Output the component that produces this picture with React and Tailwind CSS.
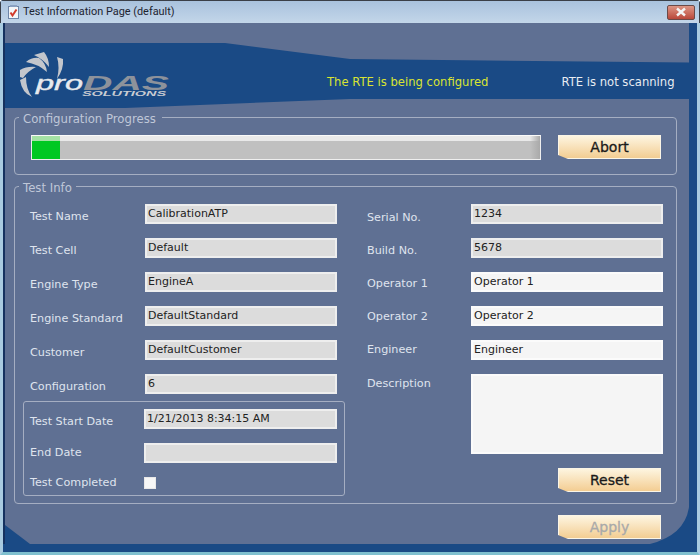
import React from 'react';

const font = { fontFamily: '"DejaVu Sans", sans-serif' };

const Field = ({ value, white, className }) => (
    <div className={`h-[20px] shrink-0 border-2 text-[11px] leading-[14px] text-[#222] ${white ? 'border-[#fbfbfb] bg-[#f5f5f5]' : 'border-[#eeeeee] bg-[#dcdcdc]'} ${className || 'w-[192px] pt-[1px] pl-[1px]'}`}>
        {value}
    </div>
);

const Label = ({ children, className }) => (
    <span className={`shrink-0 text-[11.2px] leading-[14px] text-[#dfe4ee] ${className}`}>{children}</span>
);

const Action = ({ label, disabled }) => (
    <button className={`flex h-[24px] w-[103px] items-center justify-center border border-[#fbf5e6] bg-gradient-to-b from-[#fdf5e0] to-[#f3cd92] text-[14px] [-webkit-text-stroke:0.3px] [clip-path:polygon(0_0,100%_0,100%_100%,10px_100%,0_20px)] ${disabled ? 'text-[#a9a9a9]' : 'text-[#1a1a1a]'}`}>
        {label}
    </button>
);

const GroupBox = ({ title, titleWidth, className, children }) => (
    <div className={`relative rounded-[4px] border border-[#a5aec2] ${className}`}>
        <span className={`absolute top-[-6px] left-[4px] bg-[#5f7093] pl-[4px] text-[11.7px] leading-[14px] whitespace-nowrap text-[#bfc7d8] ${titleWidth}`}>{title}</span>
        {children}
    </div>
);

const Logo = () => (
    <svg width="160" height="48" viewBox="0 0 160 48" className="shrink-0">
        <g fill="#c3c6cc">
            <path d="M15 4 L25 1 Q30 7 30 16 Q24 8 15 4Z" />
            <path d="M38 6 L44 8 Q45 18 38 28 Q41 16 38 6Z" />
            <path d="M7 11 Q13 6 20 7 Q27 12 28 21 Q19 13 7 11Z" />
            <path d="M1 19 Q8 15 17 16 Q9 20 4 27 L1 26Z" />
            <path d="M1 29 L7 26 Q7 38 13 46 Q3 42 1 29Z" />
        </g>
        <text x="17" y="39" textLength="47" lengthAdjust="spacingAndGlyphs" fontFamily="Liberation Sans" fontStyle="italic" fontSize="21" fill="#e8eaee" stroke="#e8eaee" strokeWidth="0.4">pro</text>
        <text x="64" y="39" textLength="86" lengthAdjust="spacingAndGlyphs" fontFamily="Liberation Sans" fontWeight="700" fontStyle="italic" fontSize="21" fill="#8d929b">DAS</text>
        <text x="63" y="44.5" textLength="84" lengthAdjust="spacingAndGlyphs" fontFamily="Liberation Sans" fontWeight="700" fontStyle="italic" fontSize="6.5" fill="#c9ccd2">SOLUTIONS</text>
    </svg>
);

const App = () => {
    const left = [
        ['Test Name', 'CalibrationATP'],
        ['Test Cell', 'Default'],
        ['Engine Type', 'EngineA'],
        ['Engine Standard', 'DefaultStandard'],
        ['Customer', 'DefaultCustomer'],
        ['Configuration', '6'],
    ];
    const right = [
        ['Serial No.', '1234', false],
        ['Build No.', '5678', false],
        ['Operator 1', 'Operator 1', true],
        ['Operator 2', 'Operator 2', true],
        ['Engineer', 'Engineer', true],
    ];

    return (
        <div style={font} className="flex h-[555px] w-[700px] flex-col overflow-hidden rounded-t-[4px] bg-[#1a4a85]">
            {/* title bar */}
            <div className="flex h-[23px] shrink-0 items-center border-x border-t border-[#3a3f47] bg-gradient-to-b from-[#a9c2dd] to-[#c3d6e9] pr-[4px] pl-[6px]">
                <svg width="13" height="16" viewBox="0 0 13 16" className="shrink-0">
                    <rect x="1.5" y="2.5" width="10" height="12" fill="#f4f6f8" stroke="#6f86a8" />
                    <rect x="3" y="1" width="7" height="2" fill="#8aa0c0" />
                    <path d="M3.5 8.5l2 3 4-6" stroke="#d23a2a" strokeWidth="2" fill="none" />
                </svg>
                <span className="ml-[3px] text-[10.9px] text-[#1c2430]" style={{ fontFamily: 'Roboto, sans-serif' }}>Test Information Page (default)</span>
                <div className="ml-auto flex h-[15px] w-[28px] items-center justify-center rounded-[2px] border border-[#6b4a48] bg-gradient-to-b from-[#dd9585] to-[#b9473a]">
                    <svg width="12" height="10" viewBox="0 0 12 10">
                        <path d="M2 1.5l8 7M10 1.5l-8 7" stroke="#f4f4f4" strokeWidth="2.4" />
                    </svg>
                </div>
            </div>

            {/* client area */}
            <div className="flex min-h-0 flex-1 border-x-[3px] border-b-[3px] border-x-[#a9cbe0] border-b-[#7fc0cf]">
                <div className="mr-[8px] mb-[8px] flex min-w-0 flex-1 flex-col border-l-2 border-[#15315f]">
                    <div className="relative flex-1 bg-[#5f7093]">
                        <svg width="684" height="521" className="absolute top-0 left-0">
                            <polygon points="0,20 220,20 345,36 684,39.5 684,76 345,76 120,85 0,85" fill="#1a4a85" />
                            <polygon points="0,502 25,521 0,521" fill="#1a4a85" />
                            <path d="M684,484 Q680,512 645,521 L684,521Z" fill="#1a4a85" />
                        </svg>

                        <div className="relative flex h-[85px] items-start pt-[28px] pl-[14px] text-[11.6px]">
                            <Logo />
                            <span className="mt-[23px] ml-[148px] text-[#d9e432]">The RTE is being configured</span>
                            <span className="mt-[23px] ml-[73px] text-[#e8ecf2]">RTE is not scanning</span>
                        </div>

                        <div className="relative mt-[9px] ml-[9px] w-[663px]">
                            <GroupBox title="Configuration Progress" titleWidth="w-[143px]" className="flex h-[58px] items-start pt-[17px] pl-[16px]">
                                <div className="flex h-[25px] w-[510px] border border-[#eeeeee] border-t-[#fafafa] bg-gradient-to-b from-[#e9e9e9] from-20% to-[#c0c0c0] to-20%">
                                    <div className="h-full w-[28px] bg-gradient-to-b from-[#a5e2a5] from-20% to-[#00c822] to-20%" />
                                    <div className="ml-auto h-full w-[10px] bg-gradient-to-r from-transparent to-[#a9a9a9]" />
                                </div>
                                <div className="ml-[17px]"><Action label="Abort" /></div>
                            </GroupBox>

                            <GroupBox title="Test Info" titleWidth="w-[57px]" className="mt-[11px] flex h-[318px] items-start">
                                <div className="mt-[17px] ml-[8px] flex w-[322px] flex-col">
                                    <div className="flex flex-col gap-[14px] pl-[7px]">
                                        {left.map(([label, value]) => (
                                            <div key={label} className="flex h-[20px] items-start">
                                                <Label className="h-[20px] w-[115px] pt-[6px]">{label}</Label>
                                                <Field value={value} />
                                            </div>
                                        ))}
                                    </div>
                                    <div className="mt-[7px] flex h-[95px] flex-col rounded-[3px] border border-[#a5aec2] pt-[7px] pl-[6px]">
                                        <div className="flex h-[20px] items-start">
                                            <Label className="h-[20px] w-[114px] pt-[6px]">Test Start Date</Label>
                                            <Field value="1/21/2013 8:34:15 AM" className="w-[193px] pt-[1px] pl-[1px] text-[11.7px]" />
                                        </div>
                                        <div className="mt-[14px] flex h-[20px] items-start">
                                            <Label className="h-[20px] w-[114px] pt-[3px]">End Date</Label>
                                            <Field value="" className="w-[193px]" />
                                        </div>
                                        <div className="mt-[14px] flex h-[12px] items-center">
                                            <Label className="w-[114px]">Test Completed</Label>
                                            <div className="h-[12px] w-[12px] border border-[#e8e8e8] bg-[#f6f6f6]" />
                                        </div>
                                    </div>
                                </div>
                                <div className="mt-[17px] ml-[22px] flex w-[296px]">
                                    <div className="flex w-[104px] flex-col gap-[13px]">
                                        {right.map(([label]) => (
                                            <Label key={label} className="h-[20px] pt-[7px]">{label}</Label>
                                        ))}
                                        <Label className="h-[20px] pt-[8px]">Description</Label>
                                    </div>
                                    <div className="flex flex-col">
                                        <div className="flex flex-col gap-[14px]">
                                            {right.map(([label, value, white]) => (
                                                <Field key={label} value={value} white={white} />
                                            ))}
                                            <div className="h-[80px] w-[192px] border-2 border-[#fbfbfb] bg-[#f5f5f5]" />
                                        </div>
                                        <div className="mt-[14px] ml-[87px]"><Action label="Reset" /></div>
                                    </div>
                                </div>
                            </GroupBox>

                            <div className="mt-[11px] ml-[544px]"><Action label="Apply" disabled /></div>
                        </div>
                    </div>
                </div>
            </div>
        </div>
    );
};

export default App;
